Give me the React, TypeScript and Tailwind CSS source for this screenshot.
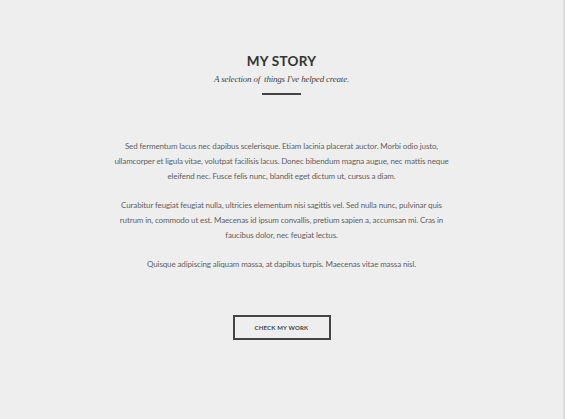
export default function App() {
  return (
    <div className="w-[565px] h-[419px] bg-[#eeeeee] border-r-2 border-[#dcdcdc] flex flex-col items-center font-['Lato',sans-serif]">
      <h2 className="mt-[52px] text-[13.5px] leading-[18px] font-bold text-[#333333] tracking-[0.3px]">MY STORY</h2>
      <p className="mt-[3px] text-[9px] leading-[12px] italic text-[#444444] tracking-[-0.2px] font-['Liberation_Serif',serif]">
        A selection of&nbsp; things I've helped create.
      </p>
      <div className="mt-[8px] w-[39px] h-[2px] bg-[#444444]" />
      <div className="mt-[44px] w-[338px] text-center text-[8px] leading-[15px] text-[#5f5f5f] tracking-[-0.12px]">
        <p>
          Sed fermentum lacus nec dapibus scelerisque. Etiam lacinia placerat auctor. Morbi odio justo,
          ullamcorper et ligula vitae, volutpat facilisis lacus. Donec bibendum magna augue, nec mattis neque
          eleifend nec. Fusce felis nunc, blandit eget dictum ut, cursus a diam.
        </p>
        <p className="mt-[14px]">
          Curabitur feugiat feugiat nulla, ultricies elementum nisi sagittis vel. Sed nulla nunc, pulvinar quis
          rutrum in, commodo ut est. Maecenas id ipsum convallis, pretium sapien a, accumsan mi. Cras in
          faucibus dolor, nec feugiat lectus.
        </p>
        <p className="mt-[14px]">
          Quisque adipiscing aliquam massa, at dapibus turpis. Maecenas vitae massa nisl.
        </p>
      </div>
      <button className="mt-[43px] w-[98px] h-[25px] border-2 border-[#444444] text-[6px] font-bold text-[#444444] tracking-[0.2px]">
        CHECK MY WORK
      </button>
    </div>
  );
}
